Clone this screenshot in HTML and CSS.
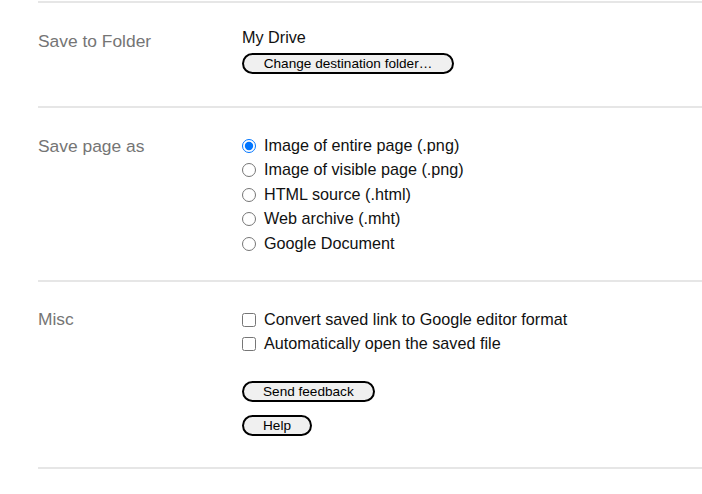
FILE: index.html
```html
<!DOCTYPE html>
<html>
<head>
<meta charset="utf-8">
<link rel="stylesheet" href="styles.css">
</head>
<body>
<div class="options">
  <section class="section sec-folder">
    <div class="label">Save to Folder</div>
    <div class="content">
      <div class="drive">My Drive</div>
      <button class="btn btn-change">Change destination folder…</button>
    </div>
  </section>
  <section class="section sec-format">
    <div class="label">Save page as</div>
    <div class="content">
      <label class="option"><input type="radio" name="fmt" checked><span>Image of entire page (.png)</span></label>
      <label class="option"><input type="radio" name="fmt"><span>Image of visible page (.png)</span></label>
      <label class="option"><input type="radio" name="fmt"><span>HTML source (.html)</span></label>
      <label class="option"><input type="radio" name="fmt"><span>Web archive (.mht)</span></label>
      <label class="option"><input type="radio" name="fmt"><span>Google Document</span></label>
    </div>
  </section>
  <section class="section sec-misc">
    <div class="label">Misc</div>
    <div class="content">
      <label class="option check"><input type="checkbox"><span>Convert saved link to Google editor format</span></label>
      <label class="option check"><input type="checkbox"><span>Automatically open the saved file</span></label>
      <div class="buttons">
        <button class="btn">Send feedback</button>
        <button class="btn btn-help">Help</button>
      </div>
    </div>
  </section>
</div>
</body>
</html>
```
FILE: styles.css
```css
html, body {
  margin: 0;
  padding: 0;
  background: #ffffff;
}
body {
  font-family: "Liberation Sans", Arial, sans-serif;
  color: #111111;
}
.options {
  margin-left: 38px;
  padding-top: 1px;
}
.section {
  display: grid;
  grid-template-columns: 204px 1fr;
  border-bottom: 2px solid #e6e6e6;
}
.section:first-child {
  border-top: 2px solid #e6e6e6;
}
.label {
  font-size: 17.4px;
  line-height: 20px;
  color: #757575;
}
.content {
  display: flex;
  flex-direction: column;
  align-items: flex-start;
  font-size: 16.2px;
}
.sec-folder {
  padding: 24px 0 32px;
}
.sec-folder .label {
  padding-top: 4px;
}
.drive {
  line-height: 20px;
}
.btn {
  font-family: "Liberation Sans", Arial, sans-serif;
  font-size: 13.6px;
  line-height: 17px;
  height: 21px;
  padding: 0 19px;
  margin: 0;
  border: 2px solid #000000;
  border-radius: 11px;
  background: #f0f0f0;
  color: #000000;
  box-sizing: border-box;
}
.btn-change {
  margin-top: 6px;
  width: 212px;
  padding: 0;
}
.sec-format {
  padding: 25px 0 24px;
}
.sec-format .label {
  padding-top: 3px;
}
.sec-misc .label {
  padding-top: 1px;
}
.option {
  display: flex;
  align-items: center;
  height: 24.5px;
  gap: 8px;
}
.option input {
  width: 14px;
  height: 14px;
  margin: 1px 0 0 0;
  flex: none;
}
.sec-misc {
  padding: 26px 0 31px;
}
.check {
  height: 24px;
}
.buttons {
  display: flex;
  flex-direction: column;
  align-items: flex-start;
  gap: 13px;
  margin-top: 25px;
}
.btn-help {
  width: 70px;
  padding: 0;
}
```
